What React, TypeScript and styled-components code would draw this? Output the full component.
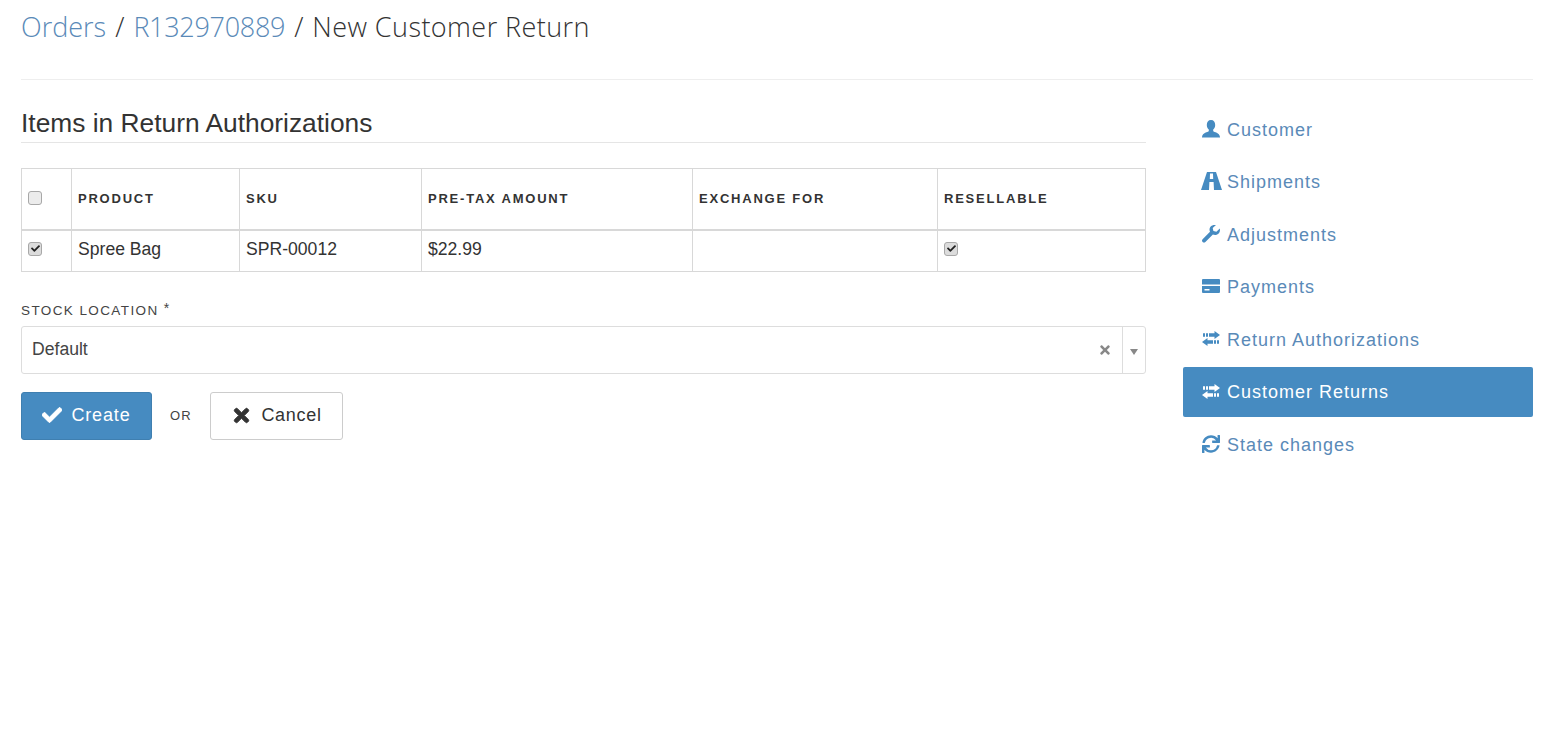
import React from "react";
import styled, { createGlobalStyle } from "styled-components";
import { FaCheck, FaTimes, FaSync } from "react-icons/fa";

const Global = createGlobalStyle`
  html, body { margin: 0; padding: 0; background: #fff; }
  body { font-family: "Liberation Sans", Arial, sans-serif; color: #333; font-size: 18px; }
  * { box-sizing: border-box; }
`;

const Page = styled.div`
  padding: 0 21px;
  min-height: 756px;
`;
const Header = styled.header`
  height: 80px;
  border-bottom: 1px solid #eee;
  padding-top: 7px;
`;
const Title = styled.h1`
  margin: 0;
  font-family: "Open Sans", sans-serif;
  font-weight: 300;
  font-size: 27px;
  line-height: 40px;
  color: #333;
`;
const Crumb = styled.a<{ $tight?: boolean }>`
  color: #5a8ab8;
  text-decoration: none;
  letter-spacing: ${(p) => (p.$tight ? "-0.3px" : "0")};
`;
const Sep = styled.span`
  margin: 0 2px;
`;
const Current = styled.span`
  letter-spacing: 0.42px;
`;
const Columns = styled.div`
  display: grid;
  grid-template-columns: 1125px 350px;
  justify-content: space-between;
`;
const Main = styled.main`
  padding-top: 28px;
`;
const SectionTitle = styled.h2`
  margin: 0 0 25px;
  height: 35px;
  font-weight: 400;
  font-size: 26.35px;
  line-height: 30px;
  color: #333;
  border-bottom: 1px solid #e5e5e5;
`;
const Table = styled.table`
  width: 1124px;
  table-layout: fixed;
  border-collapse: collapse;
`;
const Th = styled.th`
  height: 61px;
  padding: 0 6px;
  border: 1px solid #d8d8d8;
  border-bottom-width: 2px;
  text-align: left;
  font-size: 13px;
  font-weight: 700;
  letter-spacing: 1.78px;
  color: #333;
  text-transform: uppercase;
`;
const Td = styled.td`
  height: 42px;
  padding: 0 6px 2px;
  border: 1px solid #d8d8d8;
  font-size: 17.6px;
  color: #333;
`;
const Box = styled.span<{ $checked?: boolean }>`
  width: 14px;
  height: 14px;
  margin: -1px 0 1px;
  border-radius: 3px;
  border: 1px solid #a8a8a8;
  background: ${(p) => (p.$checked ? "#dcdcdc" : "#ececec")};
  color: #222;
  font-size: 9px;
  display: flex;
  align-items: center;
  justify-content: center;
`;
const Field = styled.div`
  margin-top: 27px;
`;
const Label = styled.label`
  display: block;
  font-size: 13.5px;
  letter-spacing: 1.4px;
  color: #444;
  line-height: 18px;
  text-transform: uppercase;
`;
const Star = styled.span`
  font-size: 14px;
  margin-left: 5px;
  vertical-align: 2px;
`;
const Select = styled.div`
  margin-top: 6px;
  height: 48px;
  border: 1px solid #ddd;
  border-radius: 3px;
  display: flex;
  align-items: center;
  padding-left: 10px;
  font-size: 17.6px;
  color: #444;
`;
const SelectValue = styled.span`
  flex: 1;
  padding-bottom: 2px;
`;
const Clear = styled.span`
  color: #888;
  font-size: 14px;
  display: flex;
  margin-right: 10px;
`;
const Arrow = styled.span`
  width: 23px;
  height: 100%;
  border-left: 1px solid #ddd;
  display: flex;
  align-items: center;
  justify-content: center;
  &::after {
    content: "";
    border-top: 6px solid #888;
    border-left: 4.5px solid transparent;
    border-right: 4.5px solid transparent;
    margin-top: 4px;
  }
`;
const Actions = styled.div`
  margin-top: 18px;
  display: flex;
  align-items: center;
`;
const Button = styled.button<{ $primary?: boolean }>`
  height: 48px;
  font-family: inherit;
  font-size: 18px;
  letter-spacing: ${(p) => (p.$primary ? "0.85px" : "0.7px")};
  border-radius: 3px;
  display: flex;
  align-items: center;
  justify-content: center;
  gap: 9px;
  padding: 0 0 2px;
  width: ${(p) => (p.$primary ? "131px" : "133px")};
  color: ${(p) => (p.$primary ? "#fff" : "#333")};
  background: ${(p) => (p.$primary ? "#468bc1" : "#fff")};
  border: 1px solid ${(p) => (p.$primary ? "#3f7fb0" : "#ccc")};
  svg {
    font-size: ${(p) => (p.$primary ? "20px" : "21px")};
    stroke: currentColor;
    stroke-width: 24;
  }
`;
const Or = styled.span`
  width: 58px;
  padding-bottom: 2px;
  text-align: center;
  font-size: 13px;
  letter-spacing: 1.3px;
  color: #444;
`;
const Side = styled.nav`
  padding-top: 24px;
  display: flex;
  flex-direction: column;
  gap: 2.5px;
`;
const SideItem = styled.a<{ $active?: boolean }>`
  height: 50px;
  display: flex;
  align-items: center;
  gap: 7px;
  padding: 2px 0 0 19px;
  border-radius: 2px;
  text-decoration: none;
  font-size: 18px;
  letter-spacing: 1px;
  color: ${(p) => (p.$active ? "#fff" : "#5a8ab8")};
  background: ${(p) => (p.$active ? "#468bc1" : "transparent")};
`;
const IconSlot = styled.span<{ $active?: boolean }>`
  width: 18px;
  height: 18px;
  margin-bottom: 3px;
  display: flex;
  align-items: center;
  justify-content: center;
  color: ${(p) => (p.$active ? "#fff" : "#468bc1")};
  font-size: 18px;
  svg {
    flex: none;
  }
`;

const UserIcon = () => (
  <svg width="18" height="18" viewBox="0 0 18 18" fill="currentColor">
    <path d="M9 0c2.800 0 4.200 2.100 4.200 4.900 0 2-.9 3.800-2 4.700v1.700c1 .9 6.200 1.300 6.800 5.700v.5H0v-.5c.6-4.400 5.800-4.800 6.800-5.700V9.600c-1.100-.9-2-2.700-2-4.700C4.800 2.100 6.200 0 9 0z" />
  </svg>
);
const RoadIcon = () => (
  <svg width="21" height="18" viewBox="0 0 21 18" fill="currentColor" fillRule="evenodd">
    <path d="M6 0h9l6 18H0zM9 1.500l-.2 5.500h3.400L12 1.500zM8.400 10L8 18h5l-.4-8z" />
  </svg>
);
const WrenchIcon = () => (
  <svg width="18" height="18" viewBox="0 0 18 18" fill="currentColor">
    <path d="M17.800 3.600l-3.400 3.100-3-.7-.7-3L14 0c-2.500-.5-5.500.5-6.300 3.200-.4 1.400-.1 2.800.3 3.600L.6 14.200c-.8.8-.8 2 0 2.800.8.800 2 .8 2.800 0l7.500-7.400c.8.300 2.300.6 3.700.2 2.700-.8 3.900-3.800 3.200-6.200z" />
  </svg>
);
const CardIcon = () => (
  <svg width="18" height="14" viewBox="0 0 18 14" fill="currentColor" fillRule="evenodd">
    <path d="M1 0h16a1 1 0 0 1 1 1v4.500H0V1a1 1 0 0 1 1-1zM0 7h18v6a1 1 0 0 1-1 1H1a1 1 0 0 1-1-1zm2.500 3v1.500h5V10z" />
  </svg>
);
const TransferIcon = () => (
  <svg width="18" height="15" viewBox="0 0 18 15" fill="currentColor">
    <path d="M12.500 0l5.500 4-5.500 4V5.800H7V2.200h5.500zM1 2.200h2v3.600H1zM4 2.200h2v3.600H4zM5.500 7L0 11l5.500 4v-2.200H11V9.200H5.500zM12 9.200h2v3.600h-2zM15 9.200h2v3.600h-2z" />
  </svg>
);

const nav = [
  ["Customer", <UserIcon />],
  ["Shipments", <RoadIcon />],
  ["Adjustments", <WrenchIcon />],
  ["Payments", <CardIcon />],
  ["Return Authorizations", <TransferIcon />],
  ["Customer Returns", <TransferIcon />],
  ["State changes", <FaSync />],
] as const;

export default function App() {
  return (
    <Page>
      <Global />
      <Header>
        <Title>
          <Crumb>Orders</Crumb> <Sep>/</Sep> <Crumb $tight>R132970889</Crumb> <Sep>/</Sep> <Current>New Customer Return</Current>
        </Title>
      </Header>
      <Columns>
        <Main>
          <SectionTitle>Items in Return Authorizations</SectionTitle>
          <Table>
            <colgroup>
              <col width="50" />
              <col width="168" />
              <col width="182" />
              <col width="271" />
              <col width="245" />
              <col width="208" />
            </colgroup>
            <thead>
              <tr>
                <Th><Box /></Th>
                <Th>Product</Th>
                <Th>SKU</Th>
                <Th>Pre-tax amount</Th>
                <Th>Exchange for</Th>
                <Th>Resellable</Th>
              </tr>
            </thead>
            <tbody>
              <tr>
                <Td><Box $checked><FaCheck /></Box></Td>
                <Td>Spree Bag</Td>
                <Td>SPR-00012</Td>
                <Td>$22.99</Td>
                <Td />
                <Td><Box $checked><FaCheck /></Box></Td>
              </tr>
            </tbody>
          </Table>
          <Field>
            <Label>Stock Location<Star>*</Star></Label>
            <Select>
              <SelectValue>Default</SelectValue>
              <Clear><FaTimes /></Clear>
              <Arrow />
            </Select>
          </Field>
          <Actions>
            <Button $primary><FaCheck />Create</Button>
            <Or>OR</Or>
            <Button><FaTimes />Cancel</Button>
          </Actions>
        </Main>
        <Side>
          {nav.map(([label, icon]) => {
            const active = label === "Customer Returns";
            return (
              <SideItem key={label} $active={active}>
                <IconSlot $active={active}>{icon}</IconSlot>
                {label}
              </SideItem>
            );
          })}
        </Side>
      </Columns>
    </Page>
  );
}
